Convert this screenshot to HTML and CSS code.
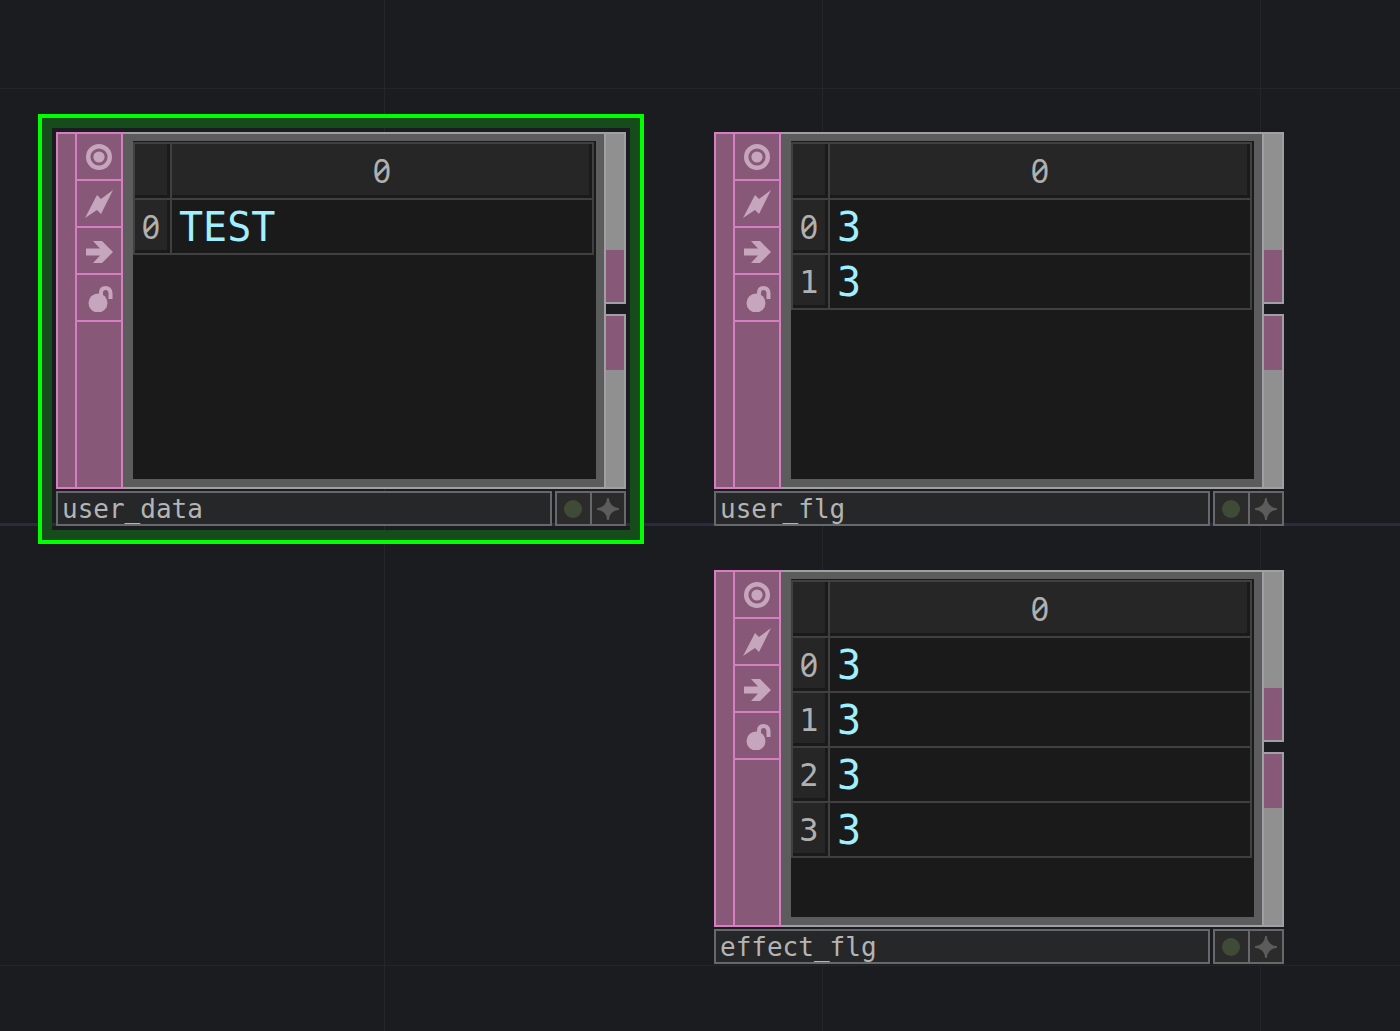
FILE: index.html
```html
<!DOCTYPE html>
<html lang="en">
<head>
<meta charset="utf-8">
<title>Network editor</title>
<link rel="stylesheet" href="styles.css">
</head>
<body>
<svg class="defs" aria-hidden="true">
  <symbol id="viewer" viewBox="0 0 28 28"><circle cx="14" cy="14" r="10.8" fill="none" stroke="currentColor" stroke-width="4.4"/><circle cx="14" cy="14" r="5.6"/></symbol>
  <symbol id="bolt" viewBox="0 0 28 28"><path d="M0 28 12 5 16 9 28 0 16 24 12 20Z"/></symbol>
  <symbol id="arrow" viewBox="0 0 28 28"><path d="M1 11.500H15L8 4H17L28 15 17 26H8L15 18.500H1Z"/></symbol>
  <symbol id="lock" viewBox="0 0 28 28"><circle cx="13" cy="19" r="9.500"/><path d="M16 15V9Q16 4 20.500 4T25.500 9V15" fill="none" stroke="currentColor" stroke-width="4"/></symbol>
  <symbol id="star" viewBox="0 0 22 22"><path d="M11 0Q12 10 22 11 12 12 11 22 10 12 0 11 10 10 11 0Z" stroke="currentColor" stroke-width="1.500"/></symbol>
</svg>
<main class="canvas">
  <div class="selection"></div>

  <section class="node node-user-data" aria-label="user_data">
    <div class="body">
      <div class="edge"></div>
      <div class="flags">
        <button aria-label="Viewer"><svg><use href="#viewer"/></svg></button>
        <button aria-label="Bypass"><svg><use href="#bolt"/></svg></button>
        <button aria-label="Export"><svg><use href="#arrow"/></svg></button>
        <button aria-label="Lock"><svg><use href="#lock"/></svg></button>
      </div>
      <div class="viewer">
        <table>
          <thead><tr><td></td><th class="zero" scope="col">0</th></tr></thead>
          <tbody><tr><th class="zero" scope="row">0</th><td>TEST</td></tr></tbody>
        </table>
      </div>
      <div class="ports"><div class="port port-top"></div><div class="port port-bottom"></div></div>
    </div>
    <div class="footer">
      <input class="name" aria-label="Operator name" value="user_data" spellcheck="false">
      <div class="tools"><button aria-label="Active"><span class="dot"></span></button><button aria-label="Add"><svg><use href="#star"/></svg></button></div>
    </div>
  </section>

  <section class="node node-user-flg" aria-label="user_flg">
    <div class="body">
      <div class="edge"></div>
      <div class="flags">
        <button aria-label="Viewer"><svg><use href="#viewer"/></svg></button>
        <button aria-label="Bypass"><svg><use href="#bolt"/></svg></button>
        <button aria-label="Export"><svg><use href="#arrow"/></svg></button>
        <button aria-label="Lock"><svg><use href="#lock"/></svg></button>
      </div>
      <div class="viewer">
        <table>
          <thead><tr><td></td><th class="zero" scope="col">0</th></tr></thead>
          <tbody>
            <tr><th class="zero" scope="row">0</th><td>3</td></tr>
            <tr><th scope="row">1</th><td>3</td></tr>
          </tbody>
        </table>
      </div>
      <div class="ports"><div class="port port-top"></div><div class="port port-bottom"></div></div>
    </div>
    <div class="footer">
      <input class="name" aria-label="Operator name" value="user_flg" spellcheck="false">
      <div class="tools"><button aria-label="Active"><span class="dot"></span></button><button aria-label="Add"><svg><use href="#star"/></svg></button></div>
    </div>
  </section>

  <section class="node node-effect-flg" aria-label="effect_flg">
    <div class="body">
      <div class="edge"></div>
      <div class="flags">
        <button aria-label="Viewer"><svg><use href="#viewer"/></svg></button>
        <button aria-label="Bypass"><svg><use href="#bolt"/></svg></button>
        <button aria-label="Export"><svg><use href="#arrow"/></svg></button>
        <button aria-label="Lock"><svg><use href="#lock"/></svg></button>
      </div>
      <div class="viewer">
        <table>
          <thead><tr><td></td><th class="zero" scope="col">0</th></tr></thead>
          <tbody>
            <tr><th class="zero" scope="row">0</th><td>3</td></tr>
            <tr><th scope="row">1</th><td>3</td></tr>
            <tr><th scope="row">2</th><td>3</td></tr>
            <tr><th scope="row">3</th><td>3</td></tr>
          </tbody>
        </table>
      </div>
      <div class="ports"><div class="port port-top"></div><div class="port port-bottom"></div></div>
    </div>
    <div class="footer">
      <input class="name" aria-label="Operator name" value="effect_flg" spellcheck="false">
      <div class="tools"><button aria-label="Active"><span class="dot"></span></button><button aria-label="Add"><svg><use href="#star"/></svg></button></div>
    </div>
  </section>
</main>
</body>
</html>
```
FILE: styles.css
```css
* { box-sizing: border-box; }

:root {
  --bg: #1b1c20;
  --grid: #25262b;
  --axis: #2b2a3f;
  --pink: #d57fc0;
  --plum: #875878;
  --rim: #a0a0a4;
}

body {
  margin: 0;
  background: var(--bg);
  font-family: "DejaVu Sans Mono", "Liberation Mono", monospace;
}

.defs { position: absolute; width: 0; height: 0; }

.canvas {
  position: relative;
  min-height: 100vh;
  overflow: hidden;
  background:
    linear-gradient(var(--axis), var(--axis)) 0 523px / 100% 3px no-repeat,
    linear-gradient(var(--grid), var(--grid)) 0 88px / 100% 1px no-repeat,
    linear-gradient(var(--grid), var(--grid)) 0 965px / 100% 1px no-repeat,
    linear-gradient(90deg, var(--grid) 1px, transparent 1px) 384px 0 / 438px 100% repeat-x;
}

.selection {
  position: absolute;
  left: 38px;
  top: 114px;
  width: 606px;
  height: 430px;
  border: 4px solid #00ff00;
  box-shadow: inset 0 0 0 10px #164b1b;
}

/* Nodes sit at free positions on the network canvas */
.node { position: absolute; width: 570px; }
.node-user-data { left: 56px; top: 132px; }
.node-user-flg { left: 714px; top: 132px; }
.node-effect-flg { left: 714px; top: 570px; }

.body { display: flex; height: 357px; }

.edge {
  width: 21px;
  border: 2px solid var(--pink);
  background: var(--plum);
}

.flags {
  width: 46px;
  border: 2px solid var(--pink);
  border-left: 0;
  background: var(--plum);
}

button {
  display: grid;
  place-items: center;
  padding: 0;
  border: 0;
  background: none;
  color: #c5a6bd;
}

.flags button {
  width: 100%;
  height: 47px;
  border-bottom: 2px solid var(--pink);
}

svg { fill: currentColor; }
.flags svg { width: 28px; height: 28px; }

.viewer {
  flex: 1;
  border: solid #5c5c5c;
  border-width: 7px 8px 8px 10px;
  background: #1a1a1a;
  box-shadow: 0 -2px var(--rim), 0 2px var(--rim);
  margin: 2px 0;
}

table {
  width: 461px;
  margin-top: 1px;
  border-collapse: collapse;
  table-layout: fixed;
}

th, td {
  height: 55px;
  padding: 0;
  border: 2px solid #404040;
  line-height: 40px;
}

thead th, thead td { height: 56px; }

th {
  font-size: 32px;
  font-weight: 400;
  color: #b0b0b0;
  text-align: center;
}

.zero {
  font-family: "Noto Sans", "DejaVu Sans Mono", sans-serif;
  font-feature-settings: "zero";
}

thead th, thead td, tbody th {
  background: #262626;
  box-shadow: inset -3px -3px #1a1a1a;
}

tr > :first-child { width: 37px; padding-right: 3px; }

tbody td {
  padding-left: 7px;
  font-size: 40px;
  color: #a0f0ff;
}

.ports {
  display: flex;
  flex-direction: column;
  gap: 10px;
  width: 22px;
  padding-left: 2px;
  background: linear-gradient(90deg, var(--rim) 2px, transparent 2px);
}

.port {
  border: 2px solid var(--rim);
  border-left: 0;
}

.port-top {
  height: 172px;
  background: linear-gradient(#909090 116px, var(--plum) 116px);
}

.port-bottom {
  flex: 1;
  background: linear-gradient(var(--plum) 54px, #909090 54px);
}

.footer {
  display: flex;
  gap: 3px;
  height: 35px;
  margin-top: 2px;
}

.name {
  flex: 1;
  min-width: 0;
  padding: 0 4px;
  border: 2px solid #67686c;
  border-radius: 0;
  background: rgba(40, 41, 42, 0.9);
  color: #b4b4b4;
  font-family: inherit;
  font-size: 26px;
}

.tools {
  display: flex;
  width: 71px;
  border: 2px solid #67686c;
  background: rgba(45, 45, 45, 0.9);
}

.tools button { flex: 1; color: #5c5c5c; }
.tools button + button { border-left: 2px solid #67686c; }
.tools svg { width: 22px; height: 22px; }

.dot {
  width: 18px;
  height: 18px;
  border-radius: 50%;
  background: #3f4b37;
}
```
